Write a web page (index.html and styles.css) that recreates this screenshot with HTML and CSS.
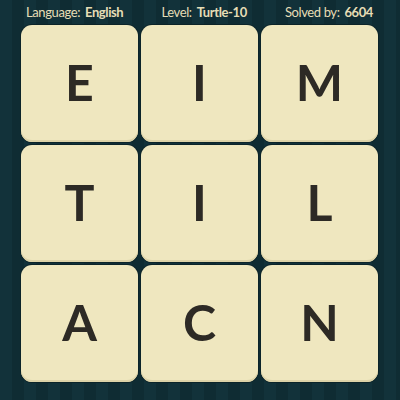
FILE: index.html
```html
<!DOCTYPE html>
<html>
<head>
<meta charset="utf-8">
<link rel="stylesheet" href="styles.css">
</head>
<body>
<div class="page">
  <div class="header">
    <div class="item">Language: <b>English</b></div>
    <div class="item">Level: <b>Turtle-10</b></div>
    <div class="item">Solved by: <b>6604</b></div>
  </div>
  <div class="grid">
    <div class="tile">E</div>
    <div class="tile">I</div>
    <div class="tile">M</div>
    <div class="tile">T</div>
    <div class="tile">I</div>
    <div class="tile">L</div>
    <div class="tile">A</div>
    <div class="tile">C</div>
    <div class="tile">N</div>
  </div>
</div>
</body>
</html>
```
FILE: styles.css
```css
html, body {
  margin: 0;
  padding: 0;
}
.page {
  width: 400px;
  height: 400px;
  overflow: hidden;
  background-color: #12323a;
  background-image: repeating-linear-gradient(90deg, #12323a 0px, #12323a 12px, #0f2c33 12px, #0f2c33 24px);
  font-family: "Lato", "DejaVu Sans", sans-serif;
}
.header {
  height: 24px;
  display: flex;
  justify-content: space-between;
  align-items: center;
  padding: 0 27px 0 26px;
  box-sizing: border-box;
  color: #e6ddb6;
  font-size: 13px;
  letter-spacing: -0.4px;
  line-height: 1;
}
.header b {
  font-weight: 700;
  margin-left: 2px;
}
.grid {
  display: grid;
  grid-template-columns: repeat(3, 117px);
  grid-auto-rows: 117px;
  gap: 3px;
  padding-left: 21px;
  padding-top: 1px;
}
.tile {
  background: #efe7bf;
  border-radius: 11px;
  box-shadow: inset 0 -2px 0 #ddd3a8, 0 0 0 1px #0c2429;
  display: flex;
  align-items: center;
  justify-content: center;
  color: #2d2a25;
  font-size: 50px;
  font-weight: 700;
  padding-bottom: 3px;
  box-sizing: border-box;
}
```
